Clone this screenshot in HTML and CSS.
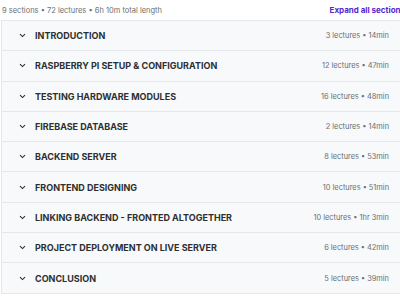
FILE: index.html
```html
<!DOCTYPE html>
<html lang="en">
<head>
    <meta charset="UTF-8">
    <title>Course content</title>
    <link rel="stylesheet" href="styles.css">
</head>
<body>
    <div class="curriculum">
        <div class="summary">
            <span class="stats">9 sections • 72 lectures • 6h 10m total length</span>
            <span class="expand">Expand all sections</span>
        </div>
        <div class="sections">
            <div class="section">
                <span class="chevron"><svg width="7" height="5" viewBox="0 0 7 5"><path d="M1 1.2 L3.5 3.6 L6 1.2" fill="none" stroke="#2d2f31" stroke-width="1.1"/></svg></span>
                <span class="title">INTRODUCTION</span>
                <span class="meta">3 lectures • 14min</span>
            </div>
            <div class="section">
                <span class="chevron"><svg width="7" height="5" viewBox="0 0 7 5"><path d="M1 1.2 L3.5 3.6 L6 1.2" fill="none" stroke="#2d2f31" stroke-width="1.1"/></svg></span>
                <span class="title">RASPBERRY PI SETUP &amp; CONFIGURATION</span>
                <span class="meta">12 lectures • 47min</span>
            </div>
            <div class="section">
                <span class="chevron"><svg width="7" height="5" viewBox="0 0 7 5"><path d="M1 1.2 L3.5 3.6 L6 1.2" fill="none" stroke="#2d2f31" stroke-width="1.1"/></svg></span>
                <span class="title">TESTING HARDWARE MODULES</span>
                <span class="meta">16 lectures • 48min</span>
            </div>
            <div class="section">
                <span class="chevron"><svg width="7" height="5" viewBox="0 0 7 5"><path d="M1 1.2 L3.5 3.6 L6 1.2" fill="none" stroke="#2d2f31" stroke-width="1.1"/></svg></span>
                <span class="title">FIREBASE DATABASE</span>
                <span class="meta">2 lectures • 14min</span>
            </div>
            <div class="section">
                <span class="chevron"><svg width="7" height="5" viewBox="0 0 7 5"><path d="M1 1.2 L3.5 3.6 L6 1.2" fill="none" stroke="#2d2f31" stroke-width="1.1"/></svg></span>
                <span class="title">BACKEND SERVER</span>
                <span class="meta">8 lectures • 53min</span>
            </div>
            <div class="section">
                <span class="chevron"><svg width="7" height="5" viewBox="0 0 7 5"><path d="M1 1.2 L3.5 3.6 L6 1.2" fill="none" stroke="#2d2f31" stroke-width="1.1"/></svg></span>
                <span class="title">FRONTEND DESIGNING</span>
                <span class="meta">10 lectures • 51min</span>
            </div>
            <div class="section">
                <span class="chevron"><svg width="7" height="5" viewBox="0 0 7 5"><path d="M1 1.2 L3.5 3.6 L6 1.2" fill="none" stroke="#2d2f31" stroke-width="1.1"/></svg></span>
                <span class="title">LINKING BACKEND - FRONTED ALTOGETHER</span>
                <span class="meta">10 lectures • 1hr 3min</span>
            </div>
            <div class="section">
                <span class="chevron"><svg width="7" height="5" viewBox="0 0 7 5"><path d="M1 1.2 L3.5 3.6 L6 1.2" fill="none" stroke="#2d2f31" stroke-width="1.1"/></svg></span>
                <span class="title">PROJECT DEPLOYMENT ON LIVE SERVER</span>
                <span class="meta">6 lectures • 42min</span>
            </div>
            <div class="section">
                <span class="chevron"><svg width="7" height="5" viewBox="0 0 7 5"><path d="M1 1.2 L3.5 3.6 L6 1.2" fill="none" stroke="#2d2f31" stroke-width="1.1"/></svg></span>
                <span class="title">CONCLUSION</span>
                <span class="meta">5 lectures • 39min</span>
            </div>
        </div>
    </div>
</body>
</html>
```

FILE: styles.css
```css
body {
    margin: 0;
    background: #fff;
    font-family: Inter, "Noto Sans", sans-serif;
    color: #2d2f31;
    overflow: hidden;
}
.curriculum {
    width: 410px;
    margin-left: 1px;
}
.summary {
    display: flex;
    justify-content: space-between;
    align-items: center;
    height: 20px;
    padding: 0 0 0 1px;
    font-size: 7.5px;
}
.stats {
    color: #6a6f73;
}
.expand {
    color: #5624d0;
    font-weight: 700;
    font-size: 8px;
    margin-right: 6px;
    white-space: nowrap;
}
.sections {
    border: 1px solid #e4e8eb;
}
.section {
    display: flex;
    align-items: center;
    height: 29.3px;
    padding: 0 21px 0 17px;
    background: #f7f9fa;
    border-bottom: 1px solid #e4e8eb;
}
.section:last-child {
    border-bottom: none;
}
.chevron {
    display: flex;
    width: 16px;
}
.title {
    flex: 1;
    font-weight: 700;
    font-size: 9px;
}
.meta {
    color: #6a6f73;
    font-size: 7.4px;
}
```
